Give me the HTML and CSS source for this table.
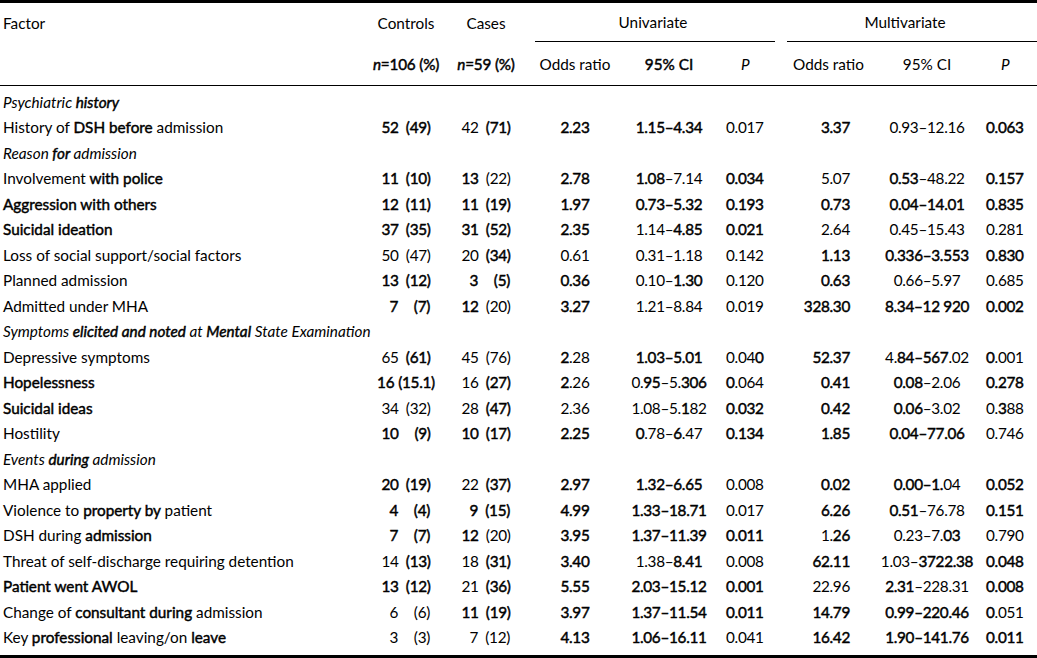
FILE: index.html
```html
<!DOCTYPE html>
<html>
<head>
<meta charset="utf-8">
<link rel="stylesheet" href="styles.css">
</head>
<body>
<table class="tbl">
<colgroup>
<col class="w-f"><col class="w-c"><col class="w-s"><col class="w-uor"><col class="w-uci"><col class="w-up"><col class="w-mor"><col class="w-mci"><col class="w-mp">
</colgroup>
<thead>
<tr class="h1">
<th class="f">Factor</th>
<th class="cnt">Controls</th>
<th class="cnt">Cases</th>
<th colspan="3" class="grp grp-u"><div class="rule">Univariate</div></th>
<th colspan="3" class="grp grp-m"><div class="rule">Multivariate</div></th>
</tr>
<tr class="h2">
<th class="f"></th>
<th class="cnt nh"><b><i>n</i>=106 (%)</b></th>
<th class="cnt nh"><b><i>n</i>=59 (%)</b></th>
<th class="uor">Odds ratio</th>
<th class="uci"><b>95% CI</b></th>
<th class="up hp-u"><i>P</i></th>
<th class="mor-h">Odds ratio</th>
<th class="mci">95% CI</th>
<th class="mp hp-m"><i>P</i></th>
</tr>
</thead>
<tbody>
<tr class="sec first"><td colspan="9"><i>Psychiatric <b>history</b></i></td></tr>
<tr><td class="f">History of <b>DSH before</b> admission</td><td class="cnt"><b><span class="num">52</span><span class="pct">(49)</span></b></td><td class="cnt"><span class="num">42</span><b class="pct">(71)</b></td><td class="uor"><b>2.23</b></td><td class="uci"><b>1.15–4.34</b></td><td class="up">0.017</td><td class="mor"><b>3.37</b></td><td class="mci">0.93–12.16</td><td class="mp"><b>0.063</b></td></tr>
<tr class="sec"><td colspan="9"><i>Reason <b>for</b> admission</i></td></tr>
<tr><td class="f">Involvement <b>with police</b></td><td class="cnt"><b><span class="num">11</span><span class="pct">(10)</span></b></td><td class="cnt"><b class="num">13</b><span class="pct">(22)</span></td><td class="uor"><b>2.78</b></td><td class="uci"><b>1.08</b>–7.14</td><td class="up"><b>0.034</b></td><td class="mor">5.07</td><td class="mci"><b>0.53</b>–48.22</td><td class="mp"><b>0.157</b></td></tr>
<tr><td class="f"><b>Aggression with others</b></td><td class="cnt"><b><span class="num">12</span><span class="pct">(11)</span></b></td><td class="cnt"><b><span class="num">11</span><span class="pct">(19)</span></b></td><td class="uor"><b>1.97</b></td><td class="uci"><b>0.73–5.32</b></td><td class="up"><b>0.193</b></td><td class="mor"><b>0.73</b></td><td class="mci"><b>0.04–14.01</b></td><td class="mp"><b>0.835</b></td></tr>
<tr><td class="f"><b>Suicidal ideation</b></td><td class="cnt"><b><span class="num">37</span><span class="pct">(35)</span></b></td><td class="cnt"><b><span class="num">31</span><span class="pct">(52)</span></b></td><td class="uor"><b>2.35</b></td><td class="uci">1.14–<b>4.85</b></td><td class="up"><b>0.021</b></td><td class="mor">2.64</td><td class="mci">0.45–15.43</td><td class="mp">0.281</td></tr>
<tr><td class="f">Loss of social support/social factors</td><td class="cnt"><span class="num">50</span><span class="pct">(47)</span></td><td class="cnt"><span class="num">20</span><b class="pct">(34)</b></td><td class="uor">0.61</td><td class="uci">0.31–1.18</td><td class="up">0.142</td><td class="mor"><b>1.13</b></td><td class="mci"><b>0.336–3.553</b></td><td class="mp"><b>0.830</b></td></tr>
<tr><td class="f">Planned admission</td><td class="cnt"><b><span class="num">13</span><span class="pct">(12)</span></b></td><td class="cnt"><b><span class="num">3</span><span class="pct">(5)</span></b></td><td class="uor"><b>0.36</b></td><td class="uci">0.10–<b>1.30</b></td><td class="up">0.120</td><td class="mor"><b>0.63</b></td><td class="mci">0.66–5.97</td><td class="mp">0.685</td></tr>
<tr><td class="f">Admitted under MHA</td><td class="cnt"><b><span class="num">7</span><span class="pct">(7)</span></b></td><td class="cnt"><b class="num">12</b><span class="pct">(20)</span></td><td class="uor"><b>3.27</b></td><td class="uci">1.21–8.84</td><td class="up">0.019</td><td class="mor"><b>328.30</b></td><td class="mci"><b>8.34–12&nbsp;920</b></td><td class="mp"><b>0.002</b></td></tr>
<tr class="sec"><td colspan="9"><i>Symptoms <b>elicited and noted</b> at <b>Mental</b> State Examination</i></td></tr>
<tr><td class="f">Depressive symptoms</td><td class="cnt"><span class="num">65</span><b class="pct">(61)</b></td><td class="cnt"><span class="num">45</span><span class="pct">(76)</span></td><td class="uor"><b>2</b>.28</td><td class="uci"><b>1.03–5.01</b></td><td class="up">0.04<b>0</b></td><td class="mor"><b>52.37</b></td><td class="mci">4.<b>84–567</b>.02</td><td class="mp"><b>0</b>.001</td></tr>
<tr><td class="f"><b>Hopelessness</b></td><td class="cnt"><b><span class="num">16</span><span class="pct">(15.1)</span></b></td><td class="cnt"><span class="num">16</span><b class="pct">(27)</b></td><td class="uor"><b>2</b>.26</td><td class="uci">0.<b>95</b>–5.<b>306</b></td><td class="up"><b>0</b>.064</td><td class="mor"><b>0.41</b></td><td class="mci"><b>0.08</b>–2.06</td><td class="mp"><b>0.278</b></td></tr>
<tr><td class="f"><b>Suicidal ideas</b></td><td class="cnt"><span class="num">34</span><span class="pct">(32)</span></td><td class="cnt"><span class="num">28</span><b class="pct">(47)</b></td><td class="uor">2.36</td><td class="uci">1.08–5.<b>1</b>82</td><td class="up"><b>0.032</b></td><td class="mor"><b>0.42</b></td><td class="mci"><b>0.06</b>–3.02</td><td class="mp">0.<b>3</b>88</td></tr>
<tr><td class="f">Hostility</td><td class="cnt"><b><span class="num">10</span><span class="pct">(9)</span></b></td><td class="cnt"><b><span class="num">10</span><span class="pct">(17)</span></b></td><td class="uor"><b>2.25</b></td><td class="uci"><b>0</b>.78–<b>6</b>.47</td><td class="up"><b>0.134</b></td><td class="mor"><b>1.85</b></td><td class="mci"><b>0.04–77.06</b></td><td class="mp">0.746</td></tr>
<tr class="sec"><td colspan="9"><i>Events <b>during</b> admission</i></td></tr>
<tr><td class="f">MHA applied</td><td class="cnt"><b><span class="num">20</span><span class="pct">(19)</span></b></td><td class="cnt"><span class="num">22</span><b class="pct">(37)</b></td><td class="uor"><b>2.97</b></td><td class="uci"><b>1.32–6.65</b></td><td class="up">0.008</td><td class="mor"><b>0.02</b></td><td class="mci"><b>0.00–1.</b>04</td><td class="mp"><b>0.052</b></td></tr>
<tr><td class="f">Violence to <b>property by</b> patient</td><td class="cnt"><b><span class="num">4</span><span class="pct">(4)</span></b></td><td class="cnt"><b><span class="num">9</span><span class="pct">(15)</span></b></td><td class="uor"><b>4.99</b></td><td class="uci"><b>1.33–18.71</b></td><td class="up">0.017</td><td class="mor"><b>6.26</b></td><td class="mci"><b>0.51</b>–76.78</td><td class="mp"><b>0.151</b></td></tr>
<tr><td class="f">DSH during <b>admission</b></td><td class="cnt"><b><span class="num">7</span><span class="pct">(7)</span></b></td><td class="cnt"><b class="num">12</b><span class="pct">(20)</span></td><td class="uor"><b>3.95</b></td><td class="uci"><b>1.37–11.39</b></td><td class="up"><b>0.011</b></td><td class="mor">1.<b>26</b></td><td class="mci">0.23–7.<b>03</b></td><td class="mp">0.790</td></tr>
<tr><td class="f">Threat of self-discharge requiring detention</td><td class="cnt"><span class="num">14</span><b class="pct">(13)</b></td><td class="cnt"><span class="num">18</span><b class="pct">(31)</b></td><td class="uor"><b>3.40</b></td><td class="uci">1.38–<b>8.41</b></td><td class="up">0.008</td><td class="mor"><b>62.11</b></td><td class="mci">1.03–<b>3722.38</b></td><td class="mp"><b>0.048</b></td></tr>
<tr><td class="f"><b>Patient went AWOL</b></td><td class="cnt"><b><span class="num">13</span><span class="pct">(12)</span></b></td><td class="cnt"><span class="num">21</span><b class="pct">(36)</b></td><td class="uor"><b>5.55</b></td><td class="uci"><b>2.03–15.12</b></td><td class="up"><b>0.001</b></td><td class="mor">22.96</td><td class="mci"><b>2.31</b>–228.31</td><td class="mp"><b>0.008</b></td></tr>
<tr><td class="f">Change of <b>consultant during</b> admission</td><td class="cnt"><span class="num">6</span><span class="pct">(6)</span></td><td class="cnt"><b><span class="num">11</span><span class="pct">(19)</span></b></td><td class="uor"><b>3.97</b></td><td class="uci"><b>1.37–11.54</b></td><td class="up"><b>0.011</b></td><td class="mor"><b>14.79</b></td><td class="mci"><b>0.99–220.46</b></td><td class="mp"><b>0</b>.051</td></tr>
<tr class="last"><td class="f">Key <b>professional</b> leaving/on <b>leave</b></td><td class="cnt"><span class="num">3</span><span class="pct">(3)</span></td><td class="cnt"><span class="num">7</span><span class="pct">(12)</span></td><td class="uor"><b>4.13</b></td><td class="uci"><b>1.06–16.11</b></td><td class="up">0.041</td><td class="mor"><b>16.42</b></td><td class="mci"><b>1.90–141.76</b></td><td class="mp"><b>0.011</b></td></tr>
</tbody>
</table>
</body>
</html>
```

FILE: styles.css
```css
html, body {
  margin: 0;
  padding: 0;
  background: #fff;
}
body {
  color: #000;
  font-family: Lato, "Liberation Sans", Arial, sans-serif;
  font-size: 15.3px;
}
.tbl {
  width: 1037px;
  table-layout: fixed;
  border-collapse: collapse;
  border-top: 3px solid #000;
  border-bottom: 3px solid #000;
}
.w-f { width: 370px; }
.w-c { width: 72px; }
.w-s { width: 88px; }
.w-uor { width: 88px; }
.w-uci { width: 94px; }
.w-up { width: 63px; }
.w-mor { width: 82px; }
.w-mci { width: 124px; }
.w-mp { width: 56px; }

th, td {
  padding: 0;
  white-space: nowrap;
  vertical-align: middle;
  font-weight: normal;
}
b {
  font-weight: normal;
  -webkit-text-stroke: 0.45px #000;
}

.h1 th { height: 39px; }
.h2 th { height: 43px; border-bottom: 1px solid #000; }

.f { text-align: left; padding-left: 3px; }
.cnt { text-align: center; }
.nh { letter-spacing: -0.2px; }

tbody .cnt, tbody .uor, tbody .uci, tbody .up,
tbody .mor, tbody .mci, tbody .mp {
  letter-spacing: -0.3px;
}

.grp { padding: 0; }
.grp .rule {
  height: 38px;
  border-bottom: 1px solid #000;
  display: flex;
  align-items: center;
  justify-content: center;
}
.grp-u .rule { margin-left: 5px; padding-right: 4px; }
.grp-m .rule { margin-left: 12px; padding-right: 14px; }

.uor { text-align: center; padding-left: 2px; }
.uci { text-align: center; padding-left: 8px; }
.up { text-align: left; padding-left: 14px; }
.hp-u { padding-left: 29px; }
.mor { text-align: right; padding-right: 7px; }
.mor-h { text-align: center; padding-left: 18px; }
.mci { text-align: center; padding-left: 16px; }
.mp { text-align: left; padding-left: 5px; }
.hp-m { padding-left: 20px; }

tbody td { height: 25.5px; }
.sec td { padding-left: 3px; text-align: left; }
.first td { padding-top: 3px; }
.last td { padding-bottom: 5px; }

.num {
  display: inline-block;
  min-width: 16px;
  text-align: right;
}
.pct {
  display: inline-block;
  min-width: 28px;
  padding-left: 4px;
  text-align: right;
}
```
